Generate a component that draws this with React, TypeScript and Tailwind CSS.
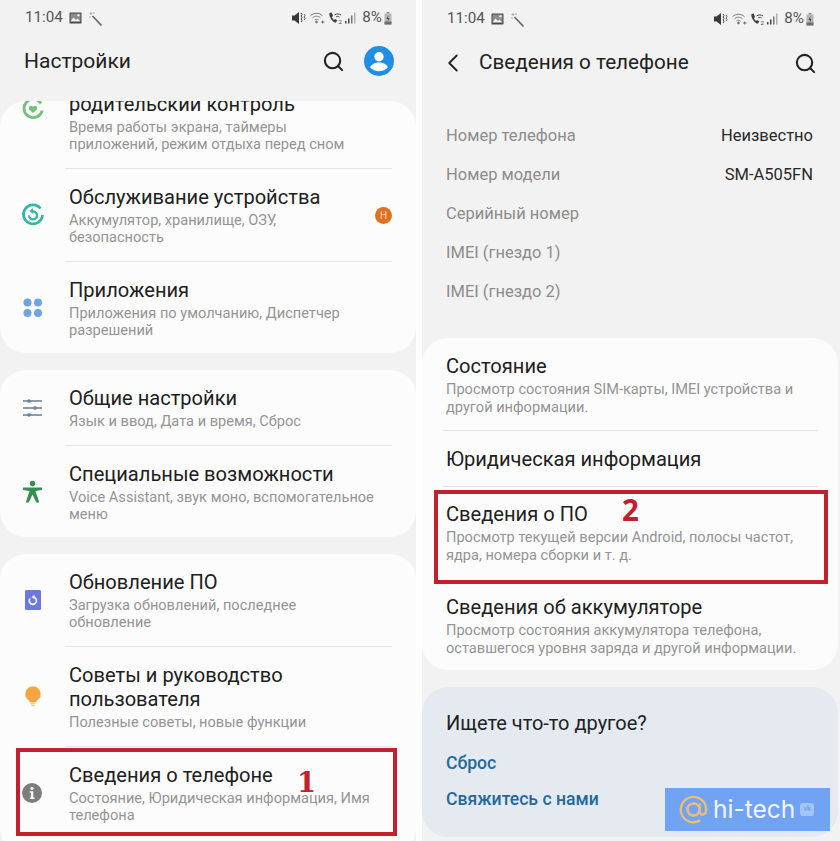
import { ReactNode } from 'react';
import { ChevronLeft, Search } from 'lucide-react';

const StatusBar = () => (
    <div className="flex items-center h-[36px] pl-[25px] pr-[24px] text-[#555555]">
        <span className="text-[15.2px] leading-none">11:04</span>
        <svg className="ml-[6px]" width="13" height="12" viewBox="0 0 13 12">
            <rect x="0.5" y="0.5" width="12" height="11" rx="0.5" fill="#4a4a4a" />
            <rect x="1.5" y="1.5" width="10" height="7.500" fill="#8c8c8c" />
            <circle cx="9.500" cy="3.300" r="1.200" fill="#e8e8e8" />
            <path d="M1.500 9.500l3-4 2.500 2.500 1.500-1.500 3 3z" fill="#f2f2f2" />
        </svg>
        <svg className="ml-[6px]" width="14" height="15" viewBox="0 0 14 15" stroke="#8a8a8a" fill="none">
            <path d="M4.500 5l9 9.500" strokeWidth="1.800" stroke="#6e6e6e" />
            <path d="M3 1v3M1.500 2.500h3M6 1v2M1 6h2" strokeWidth="0.9" stroke="#a8a8a8" />
        </svg>
        <div className="flex-1" />
        <svg width="14" height="12" viewBox="0 0 14 12" fill="#3a3a3a">
            <path d="M0 3.500h2.500L7 0v12L2.500 8.500H0z" />
            <path d="M9 1l1 1.500-1 1.500 1 1.500-1 1.500 1 1.500-1 1.500" stroke="#3a3a3a" strokeWidth="1" fill="none" />
            <path d="M12 2l1 1.500-1 1.500 1 1.500-1 1.500" stroke="#4a4a4a" strokeWidth="0.9" fill="none" />
        </svg>
        <svg className="ml-[4px]" width="15" height="12" viewBox="0 0 15 12" fill="none" stroke="#777777" strokeWidth="1">
            <path d="M0.500 3.700C4 0.500 9 0.500 12.500 3.700" />
            <path d="M2.500 5.800C5 3.700 8 3.700 10.500 5.800" />
            <path d="M4.500 8C5.800 7 7.200 7 8.500 8" />
            <circle cx="6.500" cy="10" r="0.900" fill="#777777" />
            <path d="M11 10h3.500M12.700 8.500v3" strokeWidth="0.8" stroke="#555555" />
        </svg>
        <svg className="ml-[3px]" width="15" height="12" viewBox="0 0 15 12" fill="none">
            <path d="M1.500 1C.5 4 4 9.500 7.500 10.800l2-2.200-2.500-1.500-1 .8c-1-.8-1.800-2-2-3l1-.8L3.800.5z" fill="#3f3f3f" />
            <path d="M6.500 3c2-1.400 4.500-1.400 6.500 0M8 5c1.200-.8 2.200-.8 3.500 0" stroke="#444444" strokeWidth="1" />
            <text x="10.500" y="11.800" fontSize="6" fill="#3f3f3f" fontFamily="Roboto, sans-serif">2</text>
        </svg>
        <svg className="ml-[1px]" width="12" height="12" viewBox="0 0 12 12" fill="#6e6e6e">
            <rect x="1" y="9" width="1.500" height="2.500" fill="#444444" />
            <rect x="4" y="6.500" width="1.500" height="5" fill="#444444" />
            <rect x="7" y="3.500" width="1.500" height="8" fill="#777777" />
            <rect x="10" y="0.500" width="1.500" height="11" fill="#b0b0b0" />
        </svg>
        <span className="ml-[6px] text-[15.2px] leading-none">8%</span>
        <svg className="ml-[2px]" width="8" height="13" viewBox="0 0 8 13">
            <rect x="2.500" y="0" width="3" height="1.500" fill="#8a8a8a" />
            <rect x="0.500" y="1.500" width="7" height="11" fill="#b5b5b5" />
            <rect x="0.500" y="9.500" width="7" height="3" fill="#6e6e6e" />
            <path d="M4.500 3L2.500 7h1.500L3.500 10l2-4H4z" fill="#444444" />
        </svg>
    </div>
);

const HeartRing = () => (
    <svg width="24" height="24" viewBox="0 0 24 24" fill="none">
        <path d="M20 6.500A9.200 9.200 0 1 0 21.200 13.500" stroke="#74bf7c" strokeWidth="2.800" />
        <path d="M12 16l-3.800-3.600a2.200 2.200 0 0 1 3.100-3.100l.7.600.7-.6a2.200 2.200 0 0 1 3.100 3.100z" fill="#74bf7c" />
    </svg>
);

const CareRing = () => (
    <svg width="24" height="24" viewBox="0 0 24 24" fill="none" stroke="#36b5a4">
        <path d="M19.500 5.500A9.500 9.500 0 1 0 21.500 12" strokeWidth="2.800" />
        <path d="M8 12.500a4 4 0 1 0 3-4" strokeWidth="2.200" />
        <path d="M12 5v6l-3.500-3z" fill="#36b5a4" stroke="none" />
    </svg>
);

const AppsDots = () => (
    <svg width="24" height="24" viewBox="0 0 24 24" fill="#6fa5dc">
        <circle cx="6.500" cy="6.500" r="4" />
        <circle cx="17" cy="6.500" r="4" />
        <circle cx="6.500" cy="17" r="4" />
        <circle cx="17" cy="17" r="4" />
    </svg>
);

const Sliders = () => (
    <svg width="24" height="24" viewBox="0 0 24 24" fill="#667e8f" stroke="#667e8f">
        <path d="M2 5h19M2 12h19M2 19h19" strokeWidth="1.500" />
        <circle cx="8" cy="5" r="1.800" stroke="none" />
        <circle cx="14" cy="12" r="1.800" stroke="none" />
        <circle cx="8" cy="19" r="1.800" stroke="none" />
    </svg>
);

const Accessibility = () => (
    <svg width="24" height="24" viewBox="0 0 24 24" fill="#3a8c57">
        <circle cx="11.500" cy="3.500" r="2.700" />
        <path d="M2 7.500h19v2.400l-6.500 1.100 3.800 11.500h-3l-3.800-8-3.800 8h-3L8.500 11 2 9.900z" />
    </svg>
);

const UpdateIcon = () => (
    <svg width="24" height="24" viewBox="0 0 24 24">
        <rect x="4" y="2" width="16" height="20" rx="1.500" fill="#6b78e0" />
        <path d="M9 10.500a3.600 3.600 0 1 0 4-1.200" fill="none" stroke="#ffffff" strokeWidth="1.700" />
        <path d="M13.500 6.800v4.400l-3-2.200z" fill="#ffffff" />
    </svg>
);

const BulbIcon = () => (
    <svg width="24" height="24" viewBox="0 0 24 24">
        <path d="M12 1.500a7.500 7.500 0 0 0-4.300 13.700c.7.500 1 1.200 1 2h6.600c0-.8.300-1.500 1-2A7.500 7.500 0 0 0 12 1.500z" fill="#f7a541" />
        <path d="M9.500 18.500h5M10.300 20.500h3.400" stroke="#f7c88d" strokeWidth="1.400" />
    </svg>
);

const InfoIcon = () => (
    <svg width="24" height="24" viewBox="0 0 24 24">
        <circle cx="11" cy="12" r="10" fill="#7d7d7d" />
        <circle cx="11" cy="7.300" r="1.600" fill="#fcfcfc" />
        <path d="M8.800 10.300h3.500v6.200h1.200v1.500H8.800v-1.500h1.100v-4.700H8.800z" fill="#fcfcfc" />
    </svg>
);

const Divider = ({ inset = 'ml-[65px] mr-[24px]' }: { inset?: string }) => (
    <div className={`h-[1px] bg-[#e4e4e4] ${inset}`} />
);

type RowProps = {
    icon?: ReactNode;
    title: ReactNode;
    sub: ReactNode;
    badge?: boolean;
    className?: string;
};

const Row = ({ icon, title, sub, badge, className = '' }: RowProps) => (
    <div className={`relative flex items-center pt-[15px] pb-[15px] ${className}`}>
        <div className="w-[69px] shrink-0 pl-[21px]">{icon}</div>
        <div className="flex-1 min-w-0 pr-[20px]">
            <div className="text-[20.1px] leading-[24px] py-[1px] text-[#202020]">{title}</div>
            <div className="mt-[2px] text-[14.6px] leading-[17px] text-[#949494]">{sub}</div>
        </div>
        {badge && (
            <div className="absolute right-[24px] top-[38px] flex items-center justify-center w-[17px] h-[17px] rounded-full bg-[#e2701f] text-[10px] text-[#f5d5bd]">
                Н
            </div>
        )}
    </div>
);

const InfoLine = ({ label, value }: { label: string; value?: string }) => (
    <div className="flex items-center justify-between h-[39px] text-[16.5px]">
        <span className="text-[#8c8c8c]">{label}</span>
        {value && <span className="text-[#2a2a2a]">{value}</span>}
    </div>
);

const DetailRow = ({ title, sub, className = '' }: { title: string; sub?: ReactNode; className?: string }) => (
    <div className={`px-[24px] ${className}`}>
        <div className="text-[20.1px] leading-[26px] text-[#202020]">{title}</div>
        {sub && <div className="mt-[2px] text-[14.6px] leading-[17.5px] text-[#949494]">{sub}</div>}
    </div>
);

const Card = ({ children, className = '' }: { children: ReactNode; className?: string }) => (
    <div className={`rounded-[26px] bg-[#fcfcfc] overflow-hidden ${className}`}>{children}</div>
);

const SettingsPanel = () => (
    <div className="w-[416px] h-[841px] shrink-0 overflow-hidden bg-[#f2f2f2]">
        <StatusBar />
        <div className="flex items-center h-[50px] pl-[24px] pr-[22px]">
            <span className="flex-1 text-[21px] pt-[1px] text-[#222222]">Настройки</span>
            <Search size={23} strokeWidth={2.200} className="text-[#222222] mr-[19px]" />
            <svg width="30" height="30" viewBox="0 0 32 32">
                <circle cx="16" cy="16" r="16" fill="#1f8fe5" />
                <circle cx="16" cy="11.500" r="5" fill="#ffffff" />
                <path d="M6.500 23c1.500-4 5-5.500 9.500-5.500s8 1.500 9.500 5.500c-2.500 2.500-5.800 4-9.500 4s-7-1.500-9.500-4z" fill="#ffffff" />
            </svg>
        </div>
        <div className="flex flex-col gap-[17px] mt-[15px]">
            <Card className="h-[252px]">
                {/* Scrolled list: the first row is cut by the card's top edge */}
                <Row
                    className="-mt-[25px]"
                    icon={<div className="-translate-y-[13px]"><HeartRing /></div>}
                    title="родительский контроль"
                    sub={<>Время работы экрана, таймеры<br />приложений, режим отдыха перед сном</>}
                />
                <Divider />
                <Row
                    badge
                    icon={<CareRing />}
                    title="Обслуживание устройства"
                    sub={<>Аккумулятор, хранилище, ОЗУ,<br />безопасность</>}
                />
                <Divider />
                <Row
                    icon={<AppsDots />}
                    title="Приложения"
                    sub={<>Приложения по умолчанию, Диспетчер<br />разрешений</>}
                />
            </Card>
            <Card className="h-[167px]">
                <Row icon={<Sliders />} title="Общие настройки" sub="Язык и ввод, Дата и время, Сброс" />
                <Divider />
                <Row
                    icon={<Accessibility />}
                    title="Специальные возможности"
                    sub={<>Voice Assistant, звук моно, вспомогательное<br />меню</>}
                />
            </Card>
            <Card className="relative h-[300px]">
                <Row
                    icon={<UpdateIcon />}
                    title="Обновление ПО"
                    sub={<>Загрузка обновлений, последнее<br />обновление</>}
                />
                <Divider />
                <Row
                    icon={<BulbIcon />}
                    title={<>Советы и руководство<br />пользователя</>}
                    sub="Полезные советы, новые функции"
                />
                <Divider />
                <Row
                    icon={<InfoIcon />}
                    title="Сведения о телефоне"
                    sub={<>Состояние, Юридическая информация, Имя<br />телефона</>}
                />
                {/* Annotation over the last row */}
                <div className="absolute left-[16px] top-[194px] w-[381px] h-[88px] border-[4px] border-[#c3202e]" />
                <span className="absolute left-[297px] top-[208px] text-[27.5px] leading-[40px] font-bold text-[#c3202e] font-['DejaVu_Serif',serif]">
                    1
                </span>
            </Card>
        </div>
    </div>
);

const AboutPanel = () => (
    <div className="relative w-[418px] h-[841px] shrink-0 bg-[#f2f2f2] pt-[1px] pr-[2px]">
        <StatusBar />
        <div className="flex items-center h-[48px] pl-[16px] pr-[21px] mt-[2px]">
            <ChevronLeft size={30} strokeWidth={1.500} className="text-[#222222]" />
            <span className="ml-[11px] flex-1 text-[20.7px] text-[#222222]">Сведения о телефоне</span>
            <Search size={23} strokeWidth={2.200} className="text-[#222222]" />
        </div>
        <div className="mt-[30px] pl-[24px] pr-[25px]">
            <InfoLine label="Номер телефона" value="Неизвестно" />
            <InfoLine label="Номер модели" value="SM-A505FN" />
            <InfoLine label="Серийный номер" />
            <InfoLine label="IMEI (гнездо 1)" />
            <InfoLine label="IMEI (гнездо 2)" />
        </div>
        <Card className="relative mt-[26px] h-[332px]">
            <DetailRow
                className="pt-[15px] pb-[14px]"
                title="Состояние"
                sub={<>Просмотр состояния SIM-карты, IMEI устройства и<br />другой информации.</>}
            />
            <Divider inset="ml-[21px] mr-[20px]" />
            <DetailRow className="pt-[15px] pb-[14px]" title="Юридическая информация" />
            <Divider inset="ml-[21px] mr-[20px]" />
            <DetailRow
                className="pt-[14px] pb-[20px]"
                title="Сведения о ПО"
                sub={<>Просмотр текущей версии Android, полосы частот,<br />ядра, номера сборки и т. д.</>}
            />
            <DetailRow
                className="pt-[10px]"
                title="Сведения об аккумуляторе"
                sub={<>Просмотр состояния аккумулятора телефона,<br />оставшегося уровня заряда и другой информации.</>}
            />
            {/* Annotation over "Сведения о ПО" */}
            <div className="absolute left-[12px] top-[152px] w-[394px] h-[94px] border-[4px] border-[#c3202e]" />
            <span className="absolute left-[200px] top-[152px] text-[29.5px] leading-[40px] font-bold text-[#c3202e] font-['Open_Sans',sans-serif]">
                2
            </span>
        </Card>
        <div className="mt-[17px] h-[150px] rounded-[26px] bg-[#e4eaf0] px-[24px] pt-[24px]">
            <div className="text-[20px] leading-[24px] text-[#222222]">Ищете что-то другое?</div>
            <div className="mt-[16px] text-[17.6px] leading-[24px] font-medium text-[#24699c]">Сброс</div>
            <div className="mt-[12px] text-[17.6px] leading-[24px] font-medium text-[#24699c]">Свяжитесь с нами</div>
        </div>
        {/* Site watermark */}
        <div className="absolute left-[243px] top-[788px] flex items-center w-[165px] h-[43px] bg-[#70a3f3] pl-[14px]">
            <svg width="29" height="29" viewBox="0 0 24 24" fill="none" stroke="#eebd74" strokeWidth="2">
                <circle cx="12" cy="12" r="5" />
                <path d="M17 7v6.500c0 4 5.500 3.500 5.500-1.500a10.500 10.500 0 1 0-5 9" />
            </svg>
            <span className="ml-[5px] text-[24.5px] leading-none text-[#f1f6ff] font-['Inter',sans-serif]">hi-tech</span>
            <span className="ml-[5px] flex items-center justify-center w-[14px] h-[13px] rounded-[3px] bg-[#a5c5f8] text-[7px] font-bold text-[#70a3f3]">vk</span>
        </div>
    </div>
);

export default function App() {
    return (
        <div className="flex w-[840px] h-[841px] overflow-hidden bg-white font-['Roboto',sans-serif]">
            <SettingsPanel />
            <div className="w-[6px] shrink-0" />
            <AboutPanel />
        </div>
    );
}
